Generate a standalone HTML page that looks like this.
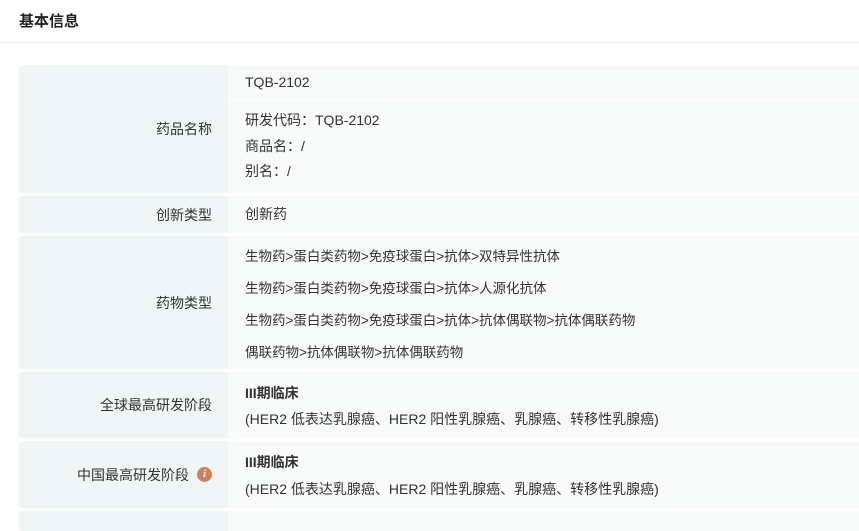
<html><head><style>
body{margin:0;background:#fff;font-family:"Liberation Sans","Noto Sans CJK SC",sans-serif;color:#333;font-size:14px;width:859px;height:522px;overflow:hidden;position:relative}
.h{position:absolute;left:19px;top:10px;font-weight:bold;font-size:15px;color:#222}
.line{position:absolute;left:0;right:0;top:42px;border-top:1px solid #e8e8e8}
.r{position:absolute;left:19px;width:840px;display:flex;border-radius:4px 0 0 4px;overflow:hidden}
.l{width:209px;background:#eff6f5;display:flex;align-items:center;justify-content:flex-end;padding-right:16px;box-sizing:border-box}
.v{flex:1;background:#f9fbfb;padding-left:17px;box-sizing:border-box}
.i{display:inline-block;width:15px;height:15px;border-radius:50%;background:#d0825e;color:#fff;font-size:11px;font-style:italic;font-weight:bold;text-align:center;line-height:15px;margin-left:8px;font-family:"Liberation Serif",serif}
</style></head><body>
<div class="h">基本信息</div><div class="line"></div>
<div class="r" style="top:65px;height:128px"><div class="l">药品名称</div>
<div class="v" style="padding:0;background:#fff"><div style="background:#f9fbfb;height:34px;padding-left:17px;line-height:34px">TQB-2102</div><div style="background:#f9fbfb;height:93px;margin-top:1px;padding:8px 0 0 17px;box-sizing:border-box;line-height:25.5px">研发代码：TQB-2102<br>商品名：/<br>别名：/</div></div></div>
<div class="r" style="top:196px;height:37px"><div class="l">创新类型</div><div class="v" style="line-height:37px">创新药</div></div>
<div class="r" style="top:236px;height:133px"><div class="l">药物类型</div><div class="v" style="padding-top:5px;line-height:32px;font-size:13.5px">生物药&gt;蛋白类药物&gt;免疫球蛋白&gt;抗体&gt;双特异性抗体<br>生物药&gt;蛋白类药物&gt;免疫球蛋白&gt;抗体&gt;人源化抗体<br>生物药&gt;蛋白类药物&gt;免疫球蛋白&gt;抗体&gt;抗体偶联物&gt;抗体偶联药物<br>偶联药物&gt;抗体偶联物&gt;抗体偶联药物</div></div>
<div class="r" style="top:372px;height:66px"><div class="l">全球最高研发阶段</div><div class="v" style="padding-top:8px;line-height:26px"><b>III期临床</b><br>(HER2 低表达乳腺癌、HER2 阳性乳腺癌、乳腺癌、转移性乳腺癌)</div></div>
<div class="r" style="top:441px;height:67px"><div class="l">中国最高研发阶段<span class="i">i</span></div><div class="v" style="padding-top:8px;line-height:27px"><b>III期临床</b><br>(HER2 低表达乳腺癌、HER2 阳性乳腺癌、乳腺癌、转移性乳腺癌)</div></div>
<div class="r" style="top:511px;height:20px"><div class="l"></div><div class="v"></div></div>
</body></html>
